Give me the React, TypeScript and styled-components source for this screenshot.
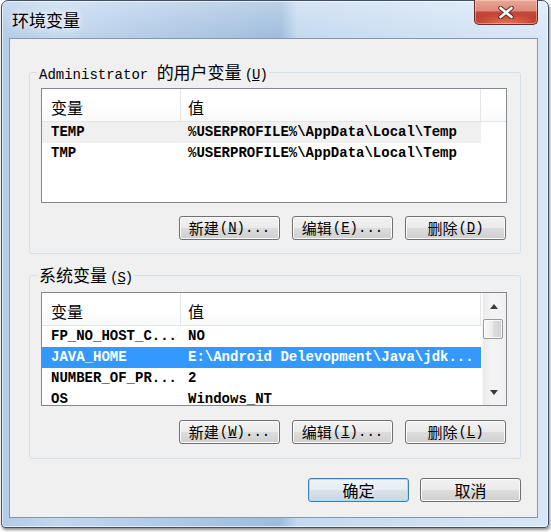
import React from "react";
import styled, { createGlobalStyle } from "styled-components";

const MONO = `"Liberation Mono", "Noto Sans CJK SC", monospace`;
const CJK = `"Noto Sans CJK SC", "Noto Sans", sans-serif`;

const GlobalStyle = createGlobalStyle`
  html, body { margin: 0; padding: 0; background: #ffffff; }
  body { font-family: ${CJK}; }
`;

const Page = styled.div`
  width: 551px;
  height: 532px;
  padding-left: 1px;
  box-sizing: border-box;
`;

const Window = styled.div`
  box-sizing: border-box;
  width: 548px;
  display: flex;
  flex-direction: column;
  border: 1px solid #3e5166;
  border-radius: 7px 7px 4px 4px;
  padding: 0 10px 9px 7px;
  background:
    linear-gradient(to bottom, rgba(255, 255, 255, 0.3), rgba(255, 255, 255, 0) 38px),
    linear-gradient(
      to right,
      #b2cbe7 0%,
      #c2d7ee 10%,
      #b0c9e5 30%,
      #9fbcdc 51%,
      #c4d9ef 54%,
      #cfe0f3 78%,
      #d8e7f6 100%
    );
  box-shadow: 1px 2px 3px rgba(0, 0, 0, 0.45), inset 0 0 0 1px rgba(255, 255, 255, 0.6);
`;

const TitleBar = styled.div`
  height: 37px;
  display: flex;
  align-items: flex-start;
  justify-content: space-between;
  padding-left: 3px;
`;

const Title = styled.div`
  margin-top: 8px;
  font-family: ${CJK};
  font-size: 17px;
  line-height: 22px;
  color: #000;
  text-shadow: 0 0 6px rgba(255, 255, 255, 0.9), 0 0 10px rgba(255, 255, 255, 0.7);
`;

const CloseButton = styled.div`
  box-sizing: border-box;
  width: 64px;
  height: 25px;
  margin-top: -1px;
  border: 1px solid #6f2a22;
  border-top: none;
  border-radius: 0 0 5px 5px;
  background:
    radial-gradient(ellipse 60% 45% at 50% 100%, rgba(240, 130, 90, 0.85), rgba(240, 130, 90, 0) 100%),
    linear-gradient(#e8a898 0%, #dd8a78 45%, #c5473a 50%, #b83525 100%);
  box-shadow: inset 0 0 0 1px rgba(255, 220, 210, 0.45);
  display: flex;
  align-items: center;
  justify-content: center;
`;

const Client = styled.div`
  flex: 1;
  display: flex;
  flex-direction: column;
  border: 1px solid #8396ab;
  background: #f0f0f0;
  padding: 0 16px 15px 19px;
`;

const Group = styled.fieldset<{ $top: number; $padTop: number; $padBottom: number }>`
  margin: ${(p) => p.$top}px 0 0 0;
  padding: ${(p) => p.$padTop}px 13px ${(p) => p.$padBottom}px 11px;
  border: 1px solid #d5dfe5;
  border-radius: 3px;
  min-width: 0;
`;

const Legend = styled.legend`
  margin-left: -4px;
  padding: 0 2px;
  font-family: ${MONO};
  font-size: 14px;
  line-height: 18px;
  height: 18px;
  color: #000;
  white-space: nowrap;
`;

const Han = styled.span<{ $size: number }>`
  font-family: ${CJK};
  font-size: ${(p) => p.$size}px;
`;

const Mono = styled.span`
  font-family: ${MONO};
  font-size: 14px;
  margin-left: 1px;
`;

const Key = styled.span`
  font-family: ${MONO};
  font-size: 14px;
  letter-spacing: -1px;
  margin-left: 3px;
  & u {
    text-underline-offset: 1px;
  }
`;

const ListBox = styled.div<{ $height: number }>`
  box-sizing: border-box;
  height: ${(p) => p.$height}px;
  display: flex;
  border: 1px solid #828790;
  background: #ffffff;
  overflow: hidden;
`;

const ListMain = styled.div`
  flex: 1;
  min-width: 0;
  display: flex;
  flex-direction: column;
  overflow: hidden;
`;

const Header = styled.div`
  box-sizing: border-box;
  height: 33px;
  flex: none;
  display: grid;
  grid-template-columns: 139px 300px 1fr;
  border-bottom: 1px solid #e5e5e5;
  background: linear-gradient(#ffffff 0%, #ffffff 55%, #f8f9fa 100%);
`;

const HeaderCell = styled.div<{ $pad: number; $divider?: boolean }>`
  padding: 4px 0 0 ${(p) => p.$pad}px;
  border-right: ${(p) => (p.$divider ? "1px solid #e3e5e8" : "none")};
  font-family: ${CJK};
  font-size: 16px;
  line-height: 29px;
  color: #000;
`;

const Body = styled.div`
  flex: 1;
  overflow: hidden;
`;

const Row = styled.div<{ $state?: "active" | "inactive" }>`
  width: 439px;
  height: 21px;
  display: grid;
  grid-template-columns: 139px 300px;
  font-family: ${MONO};
  font-size: 14px;
  font-weight: 700;
  line-height: 21px;
  color: ${(p) => (p.$state === "active" ? "#ffffff" : "#000000")};
  background: ${(p) =>
    p.$state === "active" ? "#3399ff" : p.$state === "inactive" ? "#f0f0f0" : "transparent"};
`;

const Cell = styled.div<{ $pad: number }>`
  padding-left: ${(p) => p.$pad}px;
  white-space: nowrap;
  overflow: hidden;
`;

const ScrollBar = styled.div`
  width: 23px;
  flex: none;
  display: flex;
  flex-direction: column;
  background: linear-gradient(to right, #ebebeb, #f4f4f4 40%, #f0f0f0);
  border-left: 1px solid #f7f7f7;
`;

const ScrollArrow = styled.div`
  height: 26px;
  display: flex;
  align-items: center;
  justify-content: center;
  padding-right: 2px;
`;

const Thumb = styled.div`
  box-sizing: border-box;
  width: 20px;
  height: 20px;
  border: 1px solid #9a9a9a;
  border-radius: 2px;
  background: linear-gradient(to right, #f8f8f8 0%, #ececec 45%, #dcdcdc 55%, #d0d0d0 100%);
  box-shadow: inset 0 0 0 1px rgba(255, 255, 255, 0.8);
`;

const Spacer = styled.div`
  flex: 1;
`;

const ButtonRow = styled.div<{ $top: number }>`
  display: flex;
  justify-content: flex-end;
  gap: 12px;
  margin-top: ${(p) => p.$top}px;
  padding-right: 1px;
`;

const DialogRow = styled.div`
  display: flex;
  justify-content: flex-end;
  gap: 11px;
  margin-top: 19px;
`;

const Button = styled.button<{ $default?: boolean }>`
  box-sizing: border-box;
  width: 101px;
  height: 24px;
  padding: 0;
  margin: 0;
  border: 1px solid ${(p) => (p.$default ? "#3c7fb1" : "#707070")};
  border-radius: 3px;
  background: ${(p) =>
    p.$default
      ? "linear-gradient(#eef4f8 0%, #e6eef4 49%, #d8e2ea 50%, #ccd8e2 100%)"
      : "linear-gradient(#f2f2f2 0%, #ebebeb 49%, #dddddd 50%, #cfcfcf 100%)"};
  box-shadow: inset 0 0 0 1px ${(p) => (p.$default ? "#9fe0fa" : "#fbfbfb")};
  display: flex;
  align-items: center;
  justify-content: center;
  color: #000;
  line-height: 20px;
  white-space: nowrap;
  cursor: default;
`;

const ArrowUp = () => (
  <svg width="8" height="5" viewBox="0 0 8 5">
    <polygon points="0,5 8,5 4,0" fill="#3c3c3c" />
  </svg>
);

const ArrowDown = () => (
  <svg width="8" height="5" viewBox="0 0 8 5">
    <polygon points="0,0 8,0 4,5" fill="#3c3c3c" />
  </svg>
);

const CloseX = () => (
  <svg width="18" height="13" viewBox="0 0 18 13">
    <path d="M3.5 2 L14.5 11 M14.5 2 L3.5 11" stroke="#5a2a24" strokeWidth="4.6" strokeLinecap="round" />
    <path d="M3.5 2 L14.5 11 M14.5 2 L3.5 11" stroke="#ffffff" strokeWidth="2.6" strokeLinecap="round" />
  </svg>
);

type Var = { name: string; value: string; state?: "active" | "inactive" };

const userVars: Var[] = [
  { name: "TEMP", value: "%USERPROFILE%\\AppData\\Local\\Temp", state: "inactive" },
  { name: "TMP", value: "%USERPROFILE%\\AppData\\Local\\Temp" },
];

const sysVars: Var[] = [
  { name: "FP_NO_HOST_C...", value: "NO" },
  { name: "JAVA_HOME", value: "E:\\Android Delevopment\\Java\\jdk...", state: "active" },
  { name: "NUMBER_OF_PR...", value: "2" },
  { name: "OS", value: "Windows_NT" },
];

const ListHeader = () => (
  <Header>
    <HeaderCell $pad={9} $divider>
      变量
    </HeaderCell>
    <HeaderCell $pad={7} $divider>
      值
    </HeaderCell>
    <HeaderCell $pad={0} />
  </Header>
);

const Rows = ({ items }: { items: Var[] }) => (
  <Body>
    {items.map((v) => (
      <Row key={v.name} $state={v.state}>
        <Cell $pad={9}>{v.name}</Cell>
        <Cell $pad={7}>{v.value}</Cell>
      </Row>
    ))}
  </Body>
);

const Label = ({ han, k, dots }: { han: string; k: string; dots?: boolean }) => (
  <>
    <Han $size={15}>{han}</Han>
    <Mono>
      (<u>{k}</u>){dots ? "..." : ""}
    </Mono>
  </>
);

export default function App() {
  return (
    <Page>
      <GlobalStyle />
      <Window>
        <TitleBar>
          <Title>环境变量</Title>
          <CloseButton>
            <CloseX />
          </CloseButton>
        </TitleBar>
        <Client>
          <Group $top={24} $padTop={7} $padBottom={13}>
            <Legend>
              Administrator <Han $size={17}>的用户变量</Han>
              <Key>
                (<u>U</u>)
              </Key>
            </Legend>
            <ListBox $height={115}>
              <ListMain>
                <ListHeader />
                <Rows items={userVars} />
              </ListMain>
            </ListBox>
            <ButtonRow $top={13}>
              <Button>
                <Label han="新建" k="N" dots />
              </Button>
              <Button>
                <Label han="编辑" k="E" dots />
              </Button>
              <Button>
                <Label han="删除" k="D" />
              </Button>
            </ButtonRow>
          </Group>
          <Group $top={12} $padTop={8} $padBottom={14}>
            <Legend>
              <Han $size={17}>系统变量</Han>
              <Key>
                (<u>S</u>)
              </Key>
            </Legend>
            <ListBox $height={114}>
              <ListMain>
                <ListHeader />
                <Rows items={sysVars} />
              </ListMain>
              <ScrollBar>
                <ScrollArrow>
                  <ArrowUp />
                </ScrollArrow>
                <Thumb />
                <Spacer />
                <ScrollArrow>
                  <ArrowDown />
                </ScrollArrow>
              </ScrollBar>
            </ListBox>
            <ButtonRow $top={14}>
              <Button>
                <Label han="新建" k="W" dots />
              </Button>
              <Button>
                <Label han="编辑" k="I" dots />
              </Button>
              <Button>
                <Label han="删除" k="L" />
              </Button>
            </ButtonRow>
          </Group>
          <DialogRow>
            <Button $default>
              <Han $size={16}>确定</Han>
            </Button>
            <Button>
              <Han $size={16}>取消</Han>
            </Button>
          </DialogRow>
        </Client>
      </Window>
    </Page>
  );
}
